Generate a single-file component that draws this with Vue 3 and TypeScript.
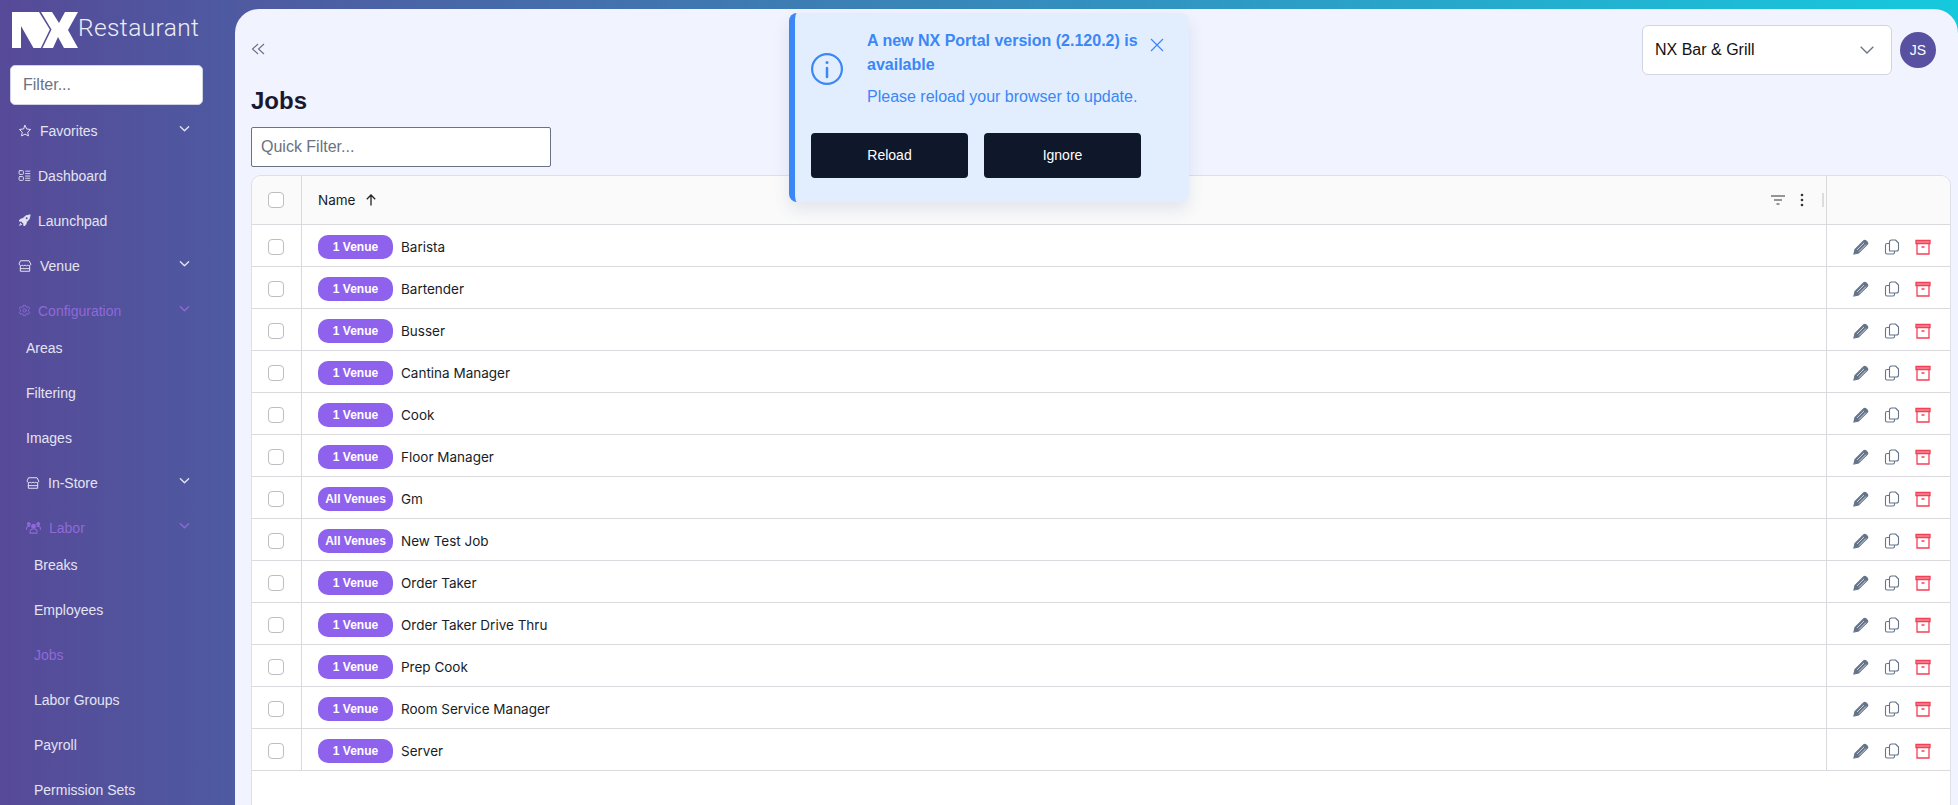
<script setup lang="ts">
interface NavItem {
  label: string;
  icon?: string;
  level: number;
  chevron?: boolean;
  active?: boolean;
  sub?: boolean;
}

const navItems: NavItem[] = [
  { label: 'Favorites', icon: 'star', level: 0, chevron: true },
  { label: 'Dashboard', icon: 'grid', level: 0 },
  { label: 'Launchpad', icon: 'rocket', level: 0 },
  { label: 'Venue', icon: 'store', level: 0, chevron: true },
  { label: 'Configuration', icon: 'gear', level: 0, chevron: true, active: true },
  { label: 'Areas', level: 1, sub: true },
  { label: 'Filtering', level: 1 },
  { label: 'Images', level: 1 },
  { label: 'In-Store', icon: 'store', level: 1, chevron: true },
  { label: 'Labor', icon: 'people', level: 1, chevron: true, active: true },
  { label: 'Breaks', level: 2, sub: true },
  { label: 'Employees', level: 2 },
  { label: 'Jobs', level: 2, active: true },
  { label: 'Labor Groups', level: 2 },
  { label: 'Payroll', level: 2 },
  { label: 'Permission Sets', level: 2 },
];

const jobs = [
  { name: 'Barista', badge: '1 Venue' },
  { name: 'Bartender', badge: '1 Venue' },
  { name: 'Busser', badge: '1 Venue' },
  { name: 'Cantina Manager', badge: '1 Venue' },
  { name: 'Cook', badge: '1 Venue' },
  { name: 'Floor Manager', badge: '1 Venue' },
  { name: 'Gm', badge: 'All Venues' },
  { name: 'New Test Job', badge: 'All Venues' },
  { name: 'Order Taker', badge: '1 Venue' },
  { name: 'Order Taker Drive Thru', badge: '1 Venue' },
  { name: 'Prep Cook', badge: '1 Venue' },
  { name: 'Room Service Manager', badge: '1 Venue' },
  { name: 'Server', badge: '1 Venue' },
];
</script>

<template>
  <div class="shell">
    <aside class="sidebar">
      <div class="brand">
        <svg class="logo" viewBox="0 0 66 36" fill="#fff">
          <path d="M0 0H27L37.800 17.500 28.800 36H21.500L9 14V36H0z" />
          <path d="M29 0H40L47 11 53 0H66L56 18 66 36H52L46 25 41 36H30.500L39.500 17.500z" />
        </svg>
        <span class="brand-name">Restaurant</span>
      </div>
      <input class="side-filter" placeholder="Filter..." />
      <nav class="nav">
        <a
          v-for="item in navItems"
          :key="item.label"
          class="nav-item"
          :class="[`level-${item.level}`, { active: item.active, sub: item.sub }]"
        >
          <svg v-if="item.icon" class="nav-icon" :class="`icon-${item.icon}`" viewBox="0 0 24 24" fill="none" stroke="currentColor" stroke-width="1.700" stroke-linejoin="round" stroke-linecap="round">
            <path v-if="item.icon === 'star'" d="M12 2.500l2.900 6 6.600.9-4.800 4.600 1.200 6.500L12 17.300l-5.900 3.200 1.200-6.500-4.800-4.600 6.600-.9z" />
            <template v-else-if="item.icon === 'grid'">
              <rect x="2" y="3" width="8" height="7" rx="1.500" />
              <rect x="2" y="14" width="8" height="7" rx="1.500" />
              <path d="M14 4h8M14 8.500h8M14 13h8M14 17h8M14 21h8" />
            </template>
            <template v-else-if="item.icon === 'rocket'">
              <path fill="currentColor" d="M22 2c-5.500 0-10 2-12.500 6.500L4.500 9.500 2 13l4.500.5 4 4 .5 4.500 3.500-2.500 1-5C20 12 22 7.500 22 2z" />
              <circle cx="16" cy="8" r="1.800" fill="#4d519e" stroke="none" />
              <path d="M5 17l-2 4 4-2" />
            </template>
            <template v-else-if="item.icon === 'store'">
              <path d="M5 3h14l3 6a3 3 0 01-5 1.500 3.500 3.500 0 01-5 0 3.500 3.500 0 01-5 0A3 3 0 012 9z" />
              <path d="M4 12.500V21h16v-8.500M4 16.500h16" />
            </template>
            <template v-else-if="item.icon === 'gear'">
              <path d="M10 2.500h4l.6 2.800 2.300 1 2.400-1.400 2.300 3.500-2.100 1.900v3.400l2.100 1.900-2.300 3.500-2.400-1.400-2.300 1-.6 2.800h-4l-.6-2.800-2.300-1-2.400 1.400-2.300-3.500 2.100-1.900v-3.400L2.400 8.400l2.300-3.500 2.400 1.400 2.300-1z" />
              <circle cx="12" cy="12" r="3" />
            </template>
            <template v-else-if="item.icon === 'people'">
              <circle cx="12" cy="10" r="3" fill="currentColor" />
              <circle cx="4.500" cy="6.500" r="2.300" fill="currentColor" />
              <circle cx="19.500" cy="6.500" r="2.300" fill="currentColor" />
              <path d="M6.500 21v-2.500a4 4 0 014-4h3a4 4 0 014 4V21zM1 15v-2a2.500 2.500 0 012.500-2.500H6M23 15v-2a2.500 2.500 0 00-2.500-2.500H18" />
            </template>
          </svg>
          <span class="nav-label">{{ item.label }}</span>
          <svg v-if="item.chevron" class="nav-chevron" viewBox="0 0 12 8" fill="none" stroke="currentColor" stroke-width="1.500" stroke-linecap="round" stroke-linejoin="round">
            <path d="M1.500 1.500 6 6l4.500-4.500" />
          </svg>
        </a>
      </nav>
    </aside>

    <main class="main">
      <header class="topbar">
        <svg class="collapse" viewBox="0 0 14 14" fill="none" stroke="#66708a" stroke-width="1.100">
          <path d="M7 2 1.500 7 7 12M13 2 7.500 7 13 12" />
        </svg>
        <div class="topbar-right">
          <div class="venue-select">
            <span>NX Bar &amp; Grill</span>
            <svg viewBox="0 0 14 8" fill="none" stroke="#6b7280" stroke-width="1.300">
              <path d="M.7.7 7 7 13.300.7" />
            </svg>
          </div>
          <div class="avatar">JS</div>
        </div>
      </header>

      <h1 class="title">Jobs</h1>
      <input class="quick-filter" placeholder="Quick Filter..." />

      <section class="table">
        <div class="row head">
          <div class="cell check"><span class="box"></span></div>
          <div class="cell name">
            <span>Name</span>
            <svg class="sort" viewBox="0 0 12 12" fill="none" stroke="#222" stroke-width="1.300">
              <path d="M6 11.500V1M1.800 5.200 6 1l4.200 4.200" />
            </svg>
            <span class="head-tools">
              <svg class="tool" viewBox="0 0 14 10" fill="none" stroke="#333" stroke-width="1.200">
                <path d="M0 1h14M3 5h8M5.500 9h3" />
              </svg>
              <svg class="tool kebab" viewBox="0 0 4 14" fill="#333">
                <circle cx="2" cy="2" r="1.300" />
                <circle cx="2" cy="7" r="1.300" />
                <circle cx="2" cy="12" r="1.300" />
              </svg>
              <span class="handle"></span>
            </span>
          </div>
          <div class="cell actions"></div>
        </div>

        <div v-for="job in jobs" :key="job.name" class="row body-row">
          <div class="cell check"><span class="box"></span></div>
          <div class="cell name">
            <span class="badge">{{ job.badge }}</span>
            <span>{{ job.name }}</span>
          </div>
          <div class="cell actions">
            <svg class="act" viewBox="0 0 16 16" fill="none" stroke="#64748b" stroke-width="1.200">
              <path d="M1 15l1-4.500L10.800 1.700a1.400 1.400 0 012 0l1.500 1.500a1.400 1.400 0 010 2L5.500 14z" fill="#64748b" />
              <path d="M4 11l7-7M6 12.500l7-7" stroke="#f4f6fb" stroke-width=".7" />
            </svg>
            <svg class="act" viewBox="0 0 16 16" fill="none" stroke="#64748b" stroke-width="1.100" stroke-linejoin="round">
              <path d="M5.500 12V3a2 2 0 012-2h4l3 3v6a2 2 0 01-2 2z" />
              <path d="M5.500 4.500H3a1.500 1.500 0 00-1.500 1.500v7.500A1.500 1.500 0 003 15h6a1.500 1.500 0 001.500-1.500V12" />
            </svg>
            <svg class="act" viewBox="0 0 16 16" fill="none" stroke="#f43f55" stroke-width="1.300">
              <path d="M1 1.500h14v3H1z" fill="#f43f55" fill-opacity=".6" />
              <path d="M2 4.500V15h12V4.500M6.500 8h3" />
            </svg>
          </div>
        </div>
      </section>

      <aside class="toast">
        <svg class="toast-icon" viewBox="0 0 32 32" fill="none" stroke="#3b87f5" stroke-width="2.200">
          <circle cx="16" cy="16" r="14.900" />
          <path d="M16 15v9" stroke-linecap="round" stroke-width="2.500" />
          <circle cx="16" cy="9.500" r="1.500" fill="#3b87f5" stroke="none" />
        </svg>
        <div class="toast-text">
          <p class="toast-title">A new NX Portal version (2.120.2) is available</p>
          <p class="toast-body">Please reload your browser to update.</p>
        </div>
        <svg class="toast-close" viewBox="0 0 14 14" fill="none" stroke="#3b87f5" stroke-width="1.200">
          <path d="M1 1l12 12M13 1 1 13" />
        </svg>
        <div class="toast-buttons">
          <button>Reload</button>
          <button>Ignore</button>
        </div>
      </aside>
    </main>
  </div>
</template>

<style>
html,
body {
  margin: 0;
  height: 100%;
  overflow: hidden;
}
</style>

<style scoped>
.shell {
  display: flex;
  height: 805px;
  overflow: hidden;
  padding-top: 9px;
  box-sizing: border-box;
  background: linear-gradient(90deg, #574a98, #16c9dd);
  font-family: 'Liberation Sans', Arial, sans-serif;
}

.sidebar {
  width: 235px;
  flex: none;
  margin-top: -9px;
  background: linear-gradient(90deg, #574a98, #4d5aa1);
  overflow: hidden;
}

.brand {
  display: flex;
  align-items: center;
  height: 65px;
  padding: 0 0 6px 12px;
  box-sizing: border-box;
}

.logo {
  width: 66px;
  height: 36px;
}

.brand-name {
  margin-top: -4px;
  color: #eceef6;
  font-family: Roboto, sans-serif;
  font-weight: 300;
  font-size: 24.5px;
  letter-spacing: 0.4px;
}

.side-filter {
  display: block;
  width: 193px;
  height: 40px;
  margin-left: 10px;
  padding: 0 12px;
  box-sizing: border-box;
  border: 1px solid #cfd3e4;
  border-radius: 5px;
  outline: none;
  background: #fff;
  font-family: inherit;
  font-size: 16px;
}

.side-filter::placeholder,
.quick-filter::placeholder {
  color: #6b7280;
  opacity: 1;
}

.nav {
  display: flex;
  flex-direction: column;
}

.nav-item {
  display: flex;
  align-items: center;
  flex: none;
  height: 45px;
  padding-right: 45px;
  color: #e3e4f2;
  font-size: 14px;
}

.nav-item:first-child {
  margin-top: 3px;
}

.nav-item.sub {
  margin-top: -8px;
}

.nav-item.level-0 {
  padding-left: 18px;
}

.nav-item.level-1 {
  padding-left: 26px;
}

.nav-item.level-2 {
  padding-left: 34px;
}

.nav-item.active {
  color: #8f69d8;
}

.nav-icon {
  width: 14px;
  height: 14px;
  margin-right: 8px;
  flex: none;
}

.icon-grid,
.icon-rocket,
.icon-gear {
  width: 13px;
  height: 13px;
  margin-right: 7px;
}

.icon-people {
  width: 15px;
  height: 15px;
}

.nav-chevron {
  width: 11px;
  height: 8px;
  margin-left: auto;
  margin-top: -4px;
}

.main {
  position: relative;
  flex: 1;
  min-width: 0;
  padding: 0 7px 0 16px;
  border-radius: 24px 24px 0 0;
  background: #f1f3fe;
}

.topbar {
  display: flex;
  align-items: center;
  justify-content: space-between;
  height: 66px;
  padding-top: 16px;
  box-sizing: border-box;
}

.collapse {
  width: 14px;
  height: 14px;
  margin-top: -2px;
}

.topbar-right {
  display: flex;
  align-items: center;
  gap: 8px;
  margin-right: 15px;
}

.venue-select {
  display: flex;
  align-items: center;
  justify-content: space-between;
  width: 250px;
  height: 50px;
  padding: 0 17px 0 12px;
  box-sizing: border-box;
  border: 1px solid #d1d5e3;
  border-radius: 6px;
  background: #fff;
  color: #111;
  font-size: 16px;
}

.venue-select svg {
  width: 14px;
  height: 8px;
}

.avatar {
  display: flex;
  align-items: center;
  justify-content: center;
  width: 36px;
  height: 36px;
  border-radius: 50%;
  background: #5850a0;
  color: #fff;
  font-size: 14px;
}

.title {
  margin: 12px 0 0;
  color: #1a1730;
  font-size: 24px;
  line-height: 28px;
  font-weight: 700;
}

.quick-filter {
  display: block;
  width: 300px;
  height: 40px;
  margin-top: 12px;
  padding: 0 9px;
  box-sizing: border-box;
  border: 1px solid #6b7280;
  border-radius: 2px;
  outline: none;
  background: #fff;
  font-family: inherit;
  font-size: 16px;
}

.table {
  margin-top: 8px;
  height: 640px;
  border: 1px solid #dde0e8;
  border-radius: 10px 10px 0 0;
  background: #fff;
  font-family: Inter, sans-serif;
  font-size: 13.5px;
  color: #181d27;
}

.row {
  display: flex;
  height: 42px;
  box-sizing: border-box;
  border-bottom: 1px solid #dadade;
}

.row.head {
  height: 49px;
  background: #fafafa;
  border-radius: 10px 10px 0 0;
}

.cell {
  display: flex;
  align-items: center;
}

.body-row .cell {
  padding-top: 2px;
  box-sizing: border-box;
}

.check {
  justify-content: center;
  width: 50px;
  flex: none;
  padding-right: 1px;
  box-sizing: border-box;
  border-right: 1px solid #dadade;
}

.box {
  width: 16px;
  height: 16px;
  box-sizing: border-box;
  border: 1px solid #bdbdc2;
  border-radius: 4px;
  background: #fff;
}

.name {
  flex: 1;
  min-width: 0;
  gap: 8px;
  padding-left: 16px;
}

.head .name {
  gap: 10px;
}

.sort {
  width: 12px;
  height: 12px;
}

.head-tools {
  display: flex;
  align-items: center;
  margin-left: auto;
}

.tool {
  width: 14px;
  height: 10px;
}

.kebab {
  width: 4px;
  height: 14px;
  margin-left: 15px;
}

.handle {
  width: 2px;
  height: 14px;
  margin-left: 18px;
  margin-right: 2px;
  background: #dcdcdf;
}

.actions {
  justify-content: flex-end;
  gap: 15px;
  width: 124px;
  flex: none;
  padding-right: 19px;
  box-sizing: border-box;
  border-left: 1px solid #dadade;
}

.act {
  width: 16px;
  height: 16px;
}

.badge {
  display: flex;
  align-items: center;
  justify-content: center;
  width: 75px;
  height: 24px;
  border-radius: 10px;
  background: #8f62ee;
  color: #fff;
  font-size: 12px;
  font-weight: 700;
  font-family: 'Liberation Sans', Arial, sans-serif;
}

.toast {
  position: absolute;
  top: 4px;
  left: 554px;
  display: grid;
  grid-template-columns: 56px 1fr 14px;
  align-items: center;
  width: 400px;
  height: 189px;
  padding: 16px 25px 24px 16px;
  box-sizing: border-box;
  border-left: 6px solid #3b87f5;
  border-radius: 8px;
  background: #e2eefe;
  box-shadow: 0 8px 16px rgba(60, 80, 140, 0.12);
}

.toast-icon {
  width: 32px;
  height: 32px;
}

.toast-text p {
  margin: 0;
  color: #3b87f5;
  font-size: 16px;
  line-height: 24px;
}

.toast-title {
  font-weight: 700;
}

.toast-text .toast-body {
  margin-top: 8px;
}

.toast-close {
  width: 14px;
  height: 14px;
  align-self: start;
  margin-top: 9px;
}

.toast-buttons {
  grid-column: 1 / -1;
  display: flex;
  gap: 16px;
  margin-top: 24px;
}

.toast-buttons button {
  width: 157px;
  height: 45px;
  padding: 0 0 2px;
  border: none;
  border-radius: 4px;
  background: #0f172a;
  color: #fff;
  font-family: inherit;
  font-size: 14px;
}
</style>
